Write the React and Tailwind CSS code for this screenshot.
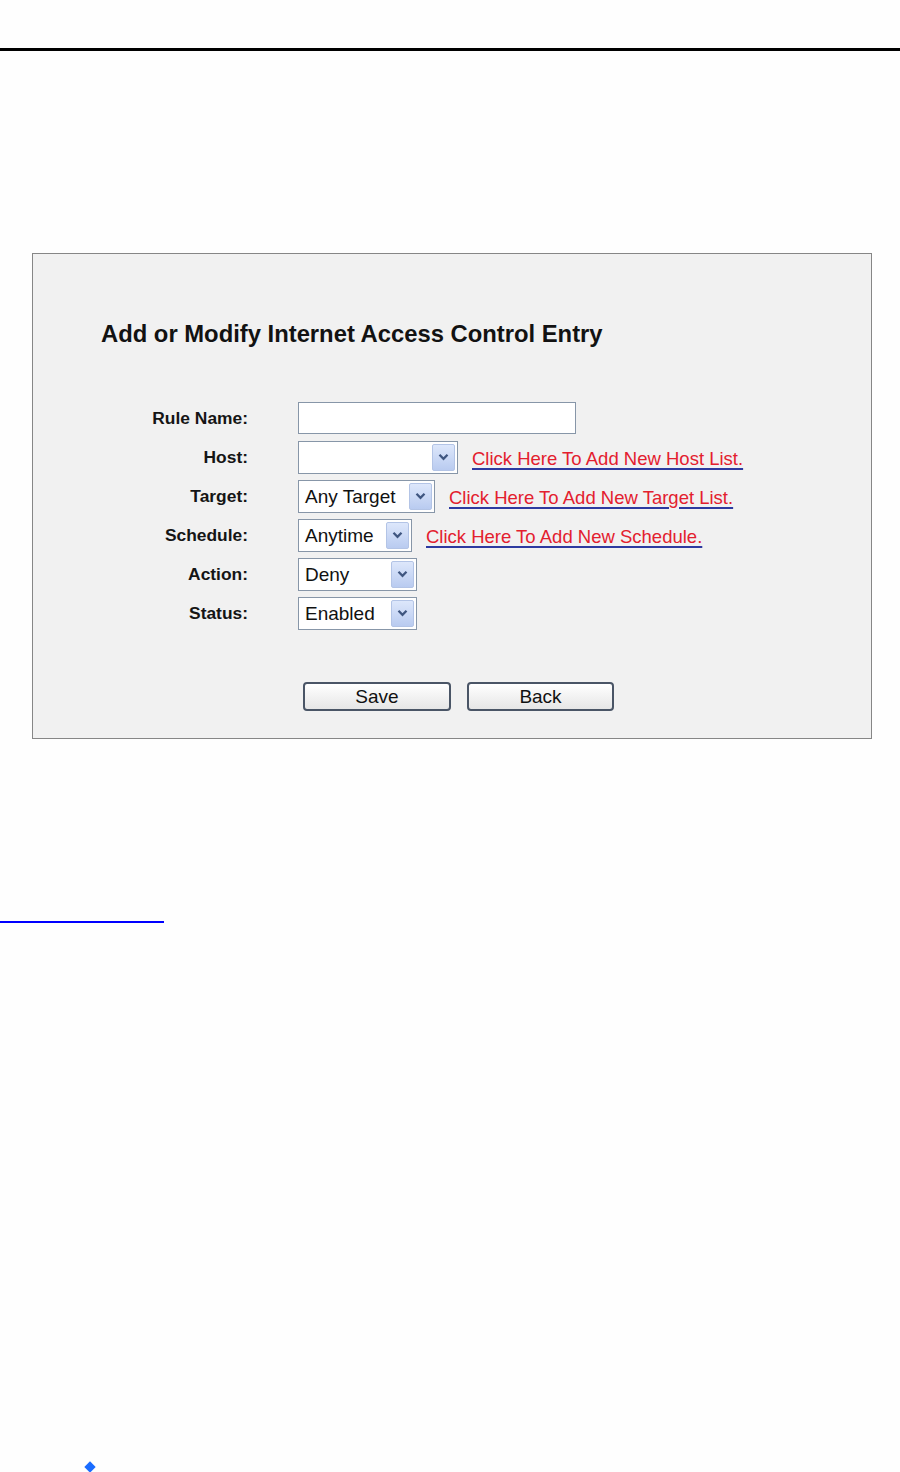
import React from "react";

const font = { fontFamily: '"Liberation Sans", Arial, sans-serif' };

function Chevron() {
  return (
    <svg width="11" height="8" viewBox="0 0 11 8">
      <path d="M1.5 1.8 L5.5 5.8 L9.5 1.8" fill="none" stroke="#3f5680" strokeWidth="2.3" />
    </svg>
  );
}

function Select({ value, width }) {
  return (
    <div
      className="h-[33px] border border-[#8796a8] bg-white flex items-center justify-between pl-[6px] pr-[2px]"
      style={{ width }}
    >
      <span className="text-[19px] leading-none text-[#111]">{value}</span>
      <div className="w-[23px] h-[27px] rounded-[2px] border border-[#b3c4e6] bg-gradient-to-b from-[#dde7fb] to-[#b9cbf0] flex items-center justify-center">
        <Chevron />
      </div>
    </div>
  );
}

function Row({ label, children }) {
  return (
    <div className="flex items-center h-[33px]">
      <div className="w-[215px] text-right text-[17.4px] font-bold text-[#151515] leading-none pt-[1px]">{label}</div>
      <div className="ml-[50px] flex items-center">{children}</div>
    </div>
  );
}

function Link({ children }) {
  return (
    <span className="ml-[14px] pt-[3px] text-[18.5px] leading-none text-[#e3202e] underline decoration-[#2d3aa0] decoration-[1.5px] underline-offset-[3px]">
      {children}
    </span>
  );
}

function Btn({ children, width }) {
  return (
    <div
      className="h-[29px] rounded-[4px] border-2 border-[#4a5566] bg-gradient-to-b from-white to-[#e6e6e6] flex items-center justify-center text-[19px] text-[#111] leading-none"
      style={{ width }}
    >
      {children}
    </div>
  );
}

export default function App() {
  return (
    <div className="w-[900px] h-[1472px] bg-[#fefefe] overflow-hidden" style={font}>
      <div className="h-[48px]" />
      <div className="h-[3px] bg-black" />
      <div className="ml-[32px] mt-[202px] w-[840px] h-[486px] border border-[#868686] bg-[#f1f1f1] pt-[68px]">
        <div className="pl-[68px] text-[23.8px] font-bold leading-none text-[#121212]">
          Add or Modify Internet Access Control Entry
        </div>
        <div className="mt-[56px] flex flex-col gap-[6px]">
          <Row label="Rule Name:">
            <div className="w-[278px] h-[32px] border border-[#8796a8] bg-white" />
          </Row>
          <Row label="Host:">
            <Select value="" width={160} />
            <Link>Click Here To Add New Host List.</Link>
          </Row>
          <Row label="Target:">
            <Select value="Any Target" width={137} />
            <Link>Click Here To Add New Target List.</Link>
          </Row>
          <Row label="Schedule:">
            <Select value="Anytime" width={114} />
            <Link>Click Here To Add New Schedule.</Link>
          </Row>
          <Row label="Action:">
            <Select value="Deny" width={119} />
          </Row>
          <Row label="Status:">
            <Select value="Enabled" width={119} />
          </Row>
        </div>
        <div className="mt-[52px] ml-[270px] flex gap-[16px]">
          <Btn width={148}>Save</Btn>
          <Btn width={147}>Back</Btn>
        </div>
      </div>
      <div className="mt-[182px] w-[164px] h-[2px] bg-[#0000ff]" />
      <div className="mt-[540px] ml-[86px] w-[8px] h-[8px] bg-[#1a6cff] rotate-45" />
    </div>
  );
}
